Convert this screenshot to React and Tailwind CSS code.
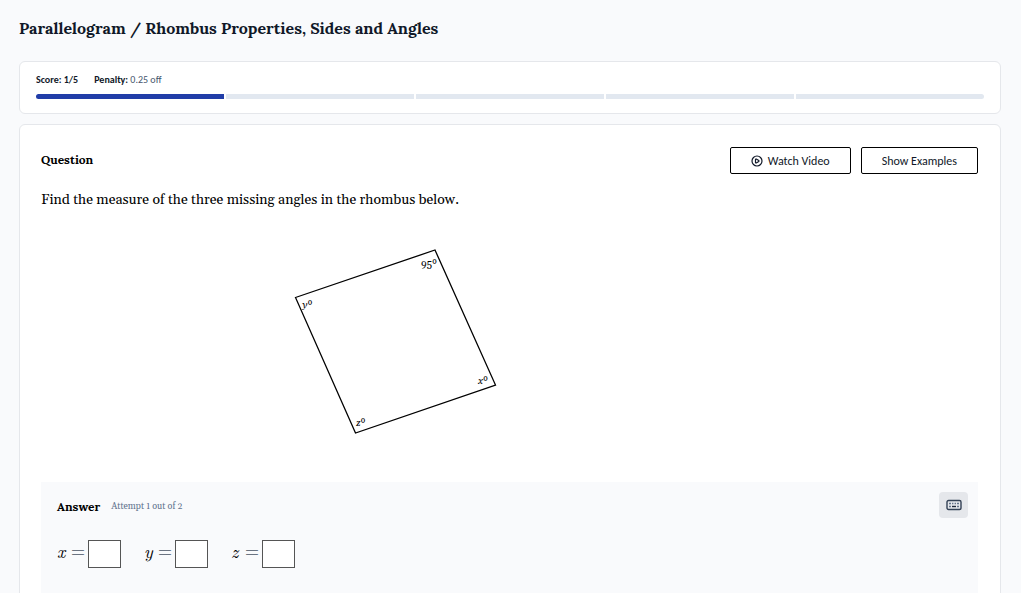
import { CirclePlay } from 'lucide-react';
import { clsx } from 'clsx';

const TOTAL = 5;
const SCORE = 1;

const variables = ['x', 'y', 'z'];

const ProgressCard = () => (
  <section className="rounded-md border border-gray-200 bg-white px-4 pt-2.5 pb-3.5">
    <div className="flex gap-4 font-['Carlito','Lato',sans-serif] text-[10px] leading-4 text-gray-900">
      <p className="font-bold">
        Score: {SCORE}/{TOTAL}
      </p>
      <p className="text-slate-600">
        <span className="font-bold text-gray-900">Penalty:</span> 0.25 off
      </p>
    </div>
    <div className="mt-1.5 flex gap-0.5 overflow-hidden rounded-full">
      {Array.from({ length: TOTAL }, (_, i) => (
        <div
          key={i}
          className={clsx('h-[5px] flex-1', i < SCORE ? 'bg-[#213da8]' : 'bg-slate-200')}
        />
      ))}
    </div>
  </section>
);

const Rhombus = () => (
  <svg
    viewBox="0 0 230 210"
    className="block w-[230px] font-['Gelasio','Liberation_Serif',serif] text-[10px]"
    role="img"
    aria-label="Rhombus with one known angle"
  >
    <path
      d="M15.5 62.5 L155 15 L215.5 150 L75.5 198 Z"
      fill="none"
      stroke="#000"
      strokeWidth="1.3"
    />
    <text x="141" y="32">95º</text>
    <text x="22" y="73"><tspan fontStyle="italic">y</tspan>º</text>
    <text x="198" y="149"><tspan fontStyle="italic">x</tspan>º</text>
    <text x="76" y="191"><tspan fontStyle="italic">z</tspan>º</text>
  </svg>
);

const KeyboardIcon = () => (
  <svg viewBox="0 0 16 12" className="h-3 w-4" fill="none" aria-hidden="true">
    <rect x="1" y="1.5" width="14" height="9" rx="1.5" stroke="#334155" strokeWidth="1.4" />
    <path
      d="M3 4.5h2M6 4.5h1.4M8.6 4.5H10M11 4.5h2M3 7.5h2M11 7.5h2"
      stroke="#64748b"
      strokeWidth="1.4"
    />
    <path d="M6 7.5h4" stroke="#1e293b" strokeWidth="1.4" />
  </svg>
);

const AnswerPanel = () => (
  <section className="bg-[#f9fafc] px-4 pt-2.5 pb-10">
    <div className="flex items-center justify-between">
      <div className="flex items-center gap-[11px] pt-1">
        <h2 className="text-[12px] leading-5 font-bold text-black">Answer</h2>
        <span className="font-['Gelasio','Liberation_Serif',serif] text-[9px] leading-5 text-slate-500">
          Attempt 1 out of 2
        </span>
      </div>
      <button
        type="button"
        aria-label="Keyboard"
        className="-mr-1.5 flex h-[26px] w-[29px] items-center justify-center rounded bg-gray-200"
      >
        <KeyboardIcon />
      </button>
    </div>
    <div className="mt-[22px] flex gap-[23px]">
      {variables.map((name) => (
        <div key={name} className="flex items-center gap-[3px]">
          <label
            htmlFor={name}
            className="flex w-7 justify-between pb-1.5 font-['Latin_Modern_Math','Gelasio',serif] text-[18px] leading-5 text-gray-600"
          >
            <i className="font-['KaTeX_Math','MathJax_Math','Latin_Modern_Roman','CMU_Serif','Gelasio',serif] text-black">
              {name}
            </i>
            <span>=</span>
          </label>
          <input
            id={name}
            type="text"
            className="h-7 w-[33px] border border-[#555] bg-white text-center text-base"
          />
        </div>
      ))}
    </div>
  </section>
);

const outlineButton =
  "flex h-[27px] items-center justify-center gap-[5px] rounded-xs border border-black bg-white px-5 font-['Carlito','Lato',sans-serif] text-[12px] text-gray-900";

const App = () => {
  return (
    <main className="min-h-screen bg-[#f9fafc] pr-5 pl-[19px] pt-4 font-['Lora','Liberation_Serif',serif]">
      <h1 className="text-[16px] leading-6 font-bold text-gray-900">
        Parallelogram / Rhombus Properties, Sides and Angles
      </h1>

      <div className="mt-[21px] flex flex-col gap-2.5">
        <ProgressCard />

        <section className="rounded-md border border-gray-200 bg-white pr-[22px] pl-[21px] pt-[22px] pb-6">
          <div className="flex items-start justify-between">
            <h2 className="text-[12px] leading-[26px] font-bold text-black">Question</h2>
            <div className="flex gap-2.5">
              <button type="button" className={outlineButton}>
                <CirclePlay className="size-3" strokeWidth={2.4} />
                Watch Video
              </button>
              <button type="button" className={outlineButton}>
                Show Examples
              </button>
            </div>
          </div>

          <p className="mt-3.5 font-['Gelasio','Liberation_Serif',serif] text-[14px] leading-6 text-black">
            Find the measure of the three missing angles in the rhombus below.
          </p>

          <div className="mt-[23px] mb-[37px] ml-[239px]">
            <Rhombus />
          </div>

          <AnswerPanel />
        </section>
      </div>
    </main>
  );
};

export default App;
